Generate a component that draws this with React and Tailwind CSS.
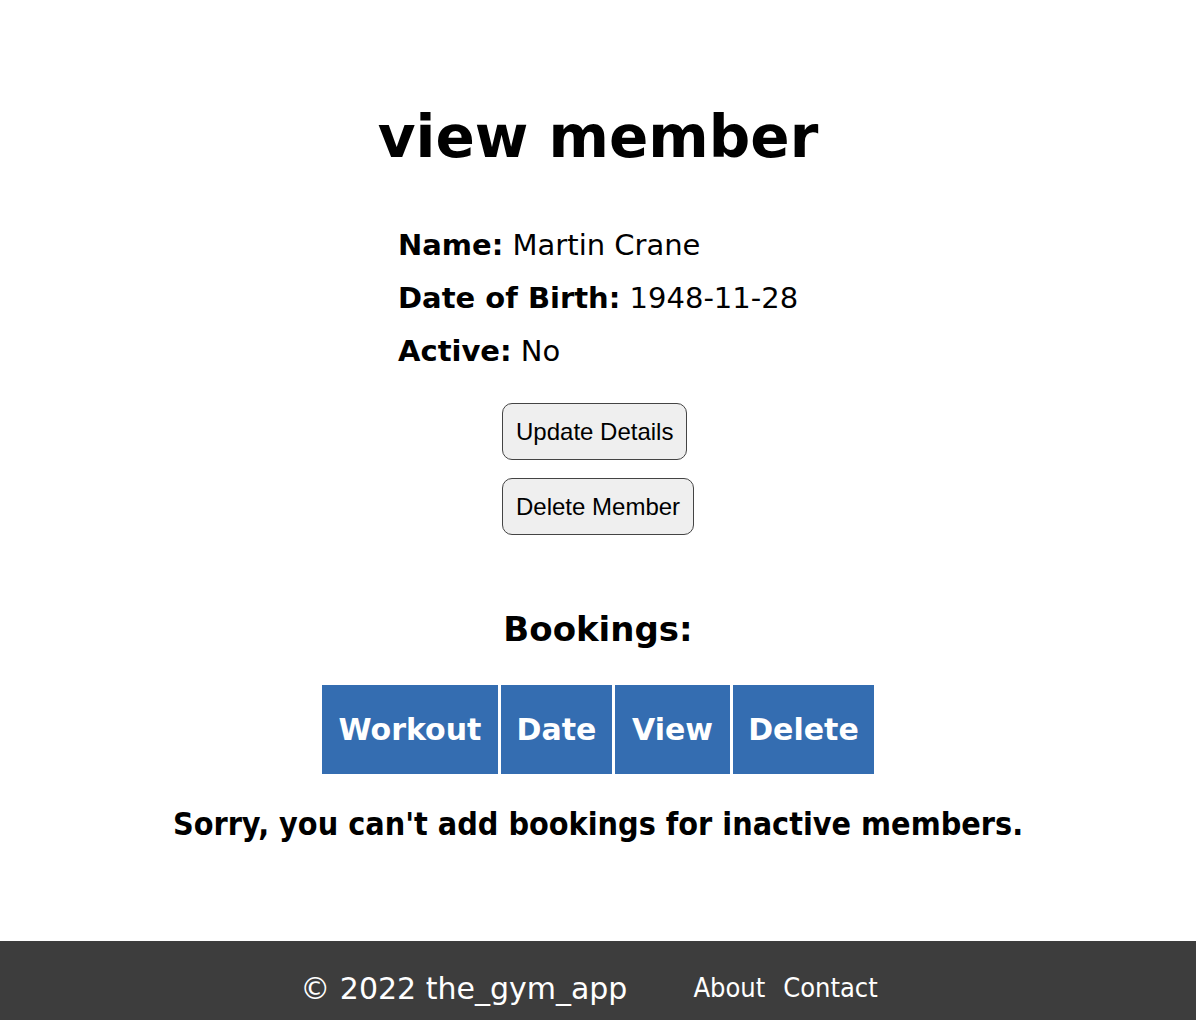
export default function App() {
  return (
    <div className="min-h-screen flex flex-col bg-white font-['DejaVu_Sans',Verdana,sans-serif] text-black">
      <main className="flex-1 flex flex-col items-center">
        <h1 className="mt-[108px] text-[58px] font-bold leading-none">view member</h1>
        <div className="mt-[62px] w-[400px] flex flex-col gap-[18px] text-[29px] leading-[35px] whitespace-nowrap">
          <p>
            <span className="font-bold">Name:</span> Martin Crane
          </p>
          <p>
            <span className="font-bold">Date of Birth:</span> 1948-11-28
          </p>
          <p>
            <span className="font-bold">Active:</span> No
          </p>
        </div>
        <div className="mt-[34px] w-[192px] flex flex-col items-start gap-[18px] font-['Liberation_Sans',Arial,sans-serif]">
          <button className="h-[57px] px-[13px] whitespace-nowrap rounded-[10px] border border-[#444] bg-[#efefef] text-[24px]">
            Update Details
          </button>
          <button className="h-[57px] px-[13px] whitespace-nowrap rounded-[10px] border border-[#444] bg-[#efefef] text-[24px]">
            Delete Member
          </button>
        </div>
        <h2 className="mt-[77px] text-[34px] font-bold leading-none">Bookings:</h2>
        <div className="mt-[39px] flex gap-[3px]">
          {[
            ["Workout", "w-[176px]"],
            ["Date", "w-[111px]"],
            ["View", "w-[115px]"],
            ["Delete", "w-[141px]"],
          ].map(([t, w]) => (
            <div
              key={t}
              className={`${w} h-[89px] flex items-center justify-center bg-[#346db1] text-white text-[30px] font-bold`}
            >
              {t}
            </div>
          ))}
        </div>
        <p className="mt-[26px] text-[32px] font-bold font-['DejaVu_Sans_Condensed','DejaVu_Sans',sans-serif]">
          Sorry, you can't add bookings for inactive members.
        </p>
      </main>
      <footer className="h-[79px] pt-[16px] pr-[18px] bg-[#3d3d3d] text-white flex items-center justify-center gap-[66px]">
        <span className="text-[30px]">© 2022 the_gym_app</span>
        <span className="flex gap-[18px] text-[27px] font-['DejaVu_Sans_Condensed','DejaVu_Sans',sans-serif]">
          <span>About</span>
          <span>Contact</span>
        </span>
      </footer>
    </div>
  );
}
